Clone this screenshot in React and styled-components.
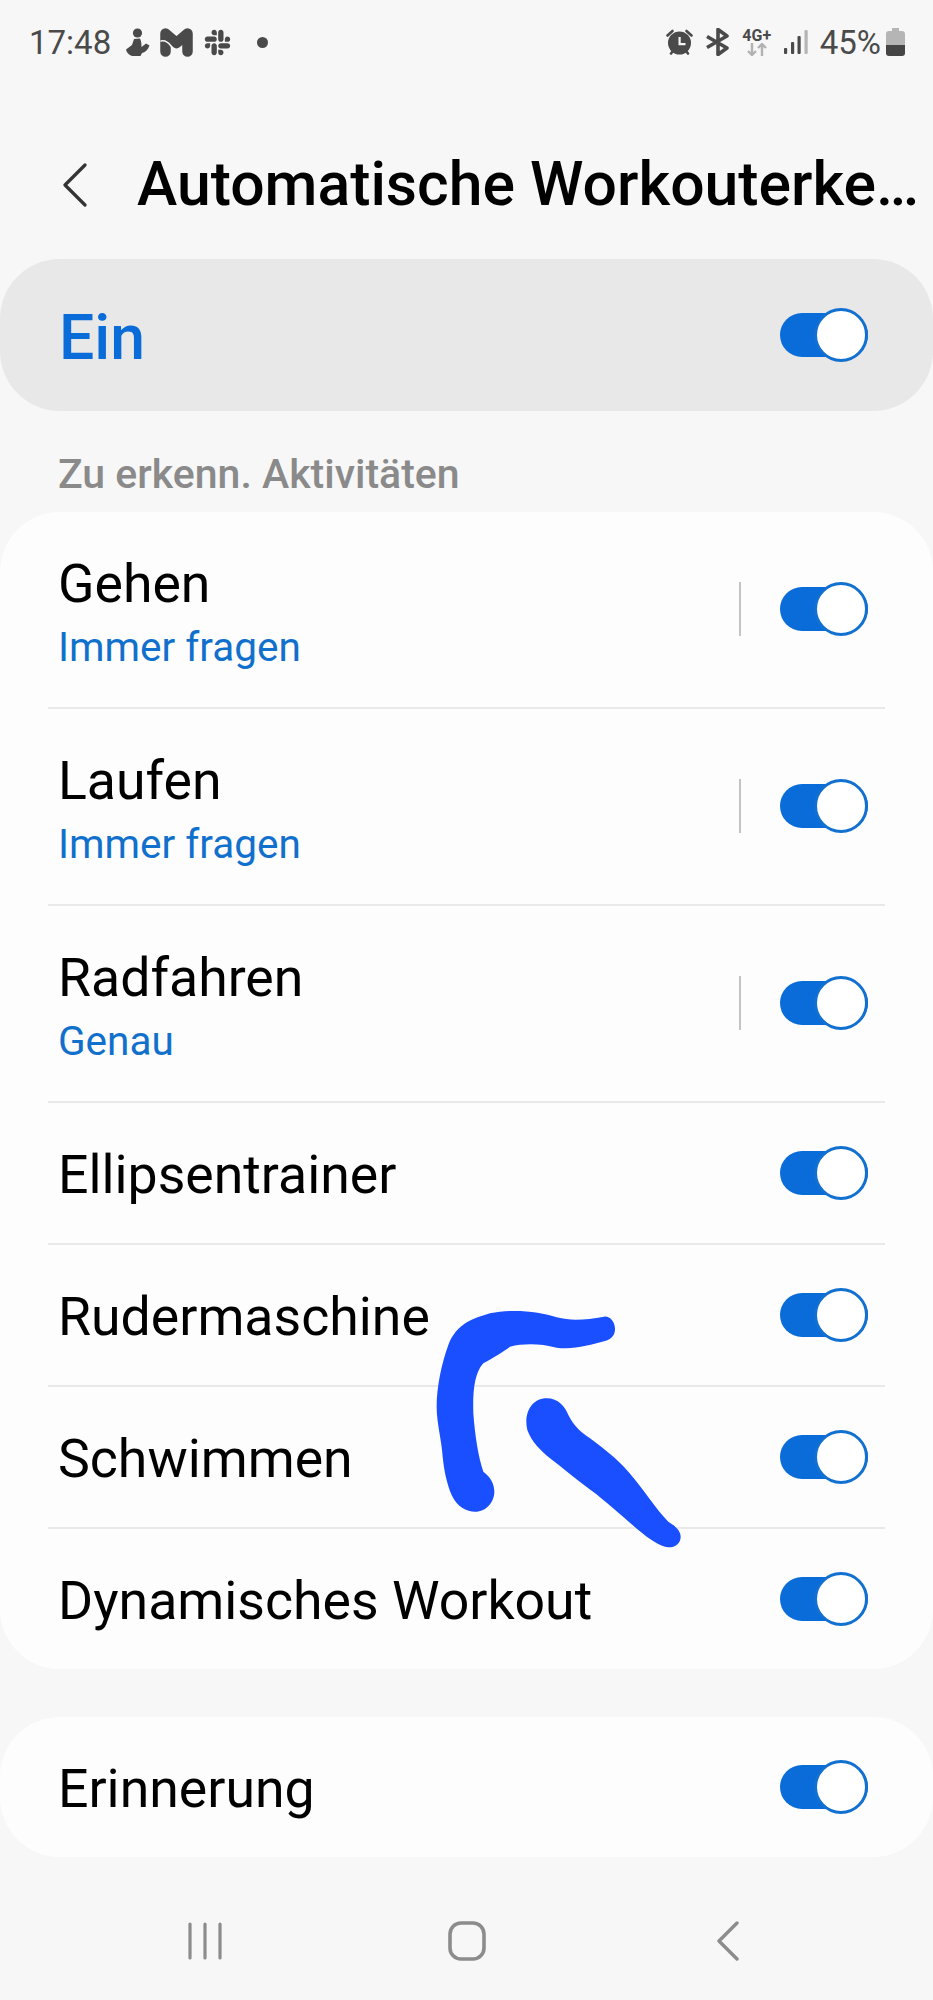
import React from 'react';
import styled, { createGlobalStyle } from 'styled-components';
import { FaSlack } from 'react-icons/fa';

const BLUE = '#0a6cd8';
const FONT = "Roboto, 'Noto Sans', 'Liberation Sans', sans-serif";

const activities = [
  { label: 'Gehen', sub: 'Immer fragen' },
  { label: 'Laufen', sub: 'Immer fragen' },
  { label: 'Radfahren', sub: 'Genau' },
  { label: 'Ellipsentrainer' },
  { label: 'Rudermaschine' },
  { label: 'Schwimmen' },
  { label: 'Dynamisches Workout' },
];

const GlobalStyle = createGlobalStyle`
  html, body {
    margin: 0;
    padding: 0;
    background: #f7f7f7;
  }
`;

const Page = styled.div`
  position: relative;
  display: flex;
  flex-direction: column;

  width: 933px;
  height: 2000px;
  overflow: hidden;

  font-family: ${FONT};
  color: #000;
  background: #f7f7f7;
`;

const StatusBar = styled.div`
  display: flex;
  align-items: center;
  justify-content: space-between;

  height: 84px;
  padding: 0 28px 0 29px;
`;

const StatusLeft = styled.div`
  display: flex;
  align-items: center;
  gap: 10px;
`;

const Time = styled.span`
  margin-right: 5px;
  font-size: 33px;
  color: #4a4a4a;
`;

const Dot = styled.span`
  width: 11px;
  height: 11px;
  margin-left: 15px;
  border-radius: 50%;
  background: #4a4a4a;
`;

const StatusRight = styled.div`
  display: flex;
  align-items: center;
  gap: 12px;
`;

const Network = styled.div`
  display: flex;
  flex-direction: column;
  align-items: center;
  width: 30px;
`;

const NetworkLabel = styled.span`
  font-size: 16px;
  font-weight: 700;
  line-height: 15px;
  color: #4a4a4a;
`;

const Percent = styled.span`
  margin-right: -7px;
  font-size: 33px;
  color: #4a4a4a;
`;

const Header = styled.div`
  display: flex;
  align-items: center;
  gap: 50px;

  height: 175px;
  padding: 26px 8px 0 63px;
  box-sizing: border-box;
`;

const Title = styled.h1`
  margin: 0;
  white-space: nowrap;

  font-size: 60.700px;
  font-weight: 500;
`;

const MainSwitch = styled.div`
  display: flex;
  align-items: center;
  justify-content: space-between;

  height: 152px;
  padding: 0 65px 0 59px;
  border-radius: 60px;
  background: #e8e8e8;
`;

const MainLabel = styled.span`
  padding-top: 4px;
  font-size: 62.500px;
  font-weight: 500;
  color: ${BLUE};
`;

const SectionTitle = styled.div`
  display: flex;
  align-items: center;

  height: 101px;
  padding: 24px 0 0 58px;
  box-sizing: border-box;

  font-size: 41px;
  font-weight: 500;
  color: #8a8a8a;
`;

const Card = styled.div`
  padding: 0 48px;
  border-radius: 60px;
  background: #fdfdfd;
`;

const ReminderCard = styled(Card)`
  margin-top: 48px;
`;

const Row = styled.div`
  display: flex;
  align-items: center;

  height: ${(p) => (p.$tall ? '197px' : '142px')};
  padding: 0 17px ${(p) => (p.$tall ? '2px' : '0')} 10px;
  border-bottom: 2px solid #e9e9e9;
  box-sizing: border-box;

  &:last-child {
    height: 140px;
    border-bottom: none;
  }
`;

const RowText = styled.div`
  display: flex;
  flex-direction: column;
  flex: 1;

  padding-top: ${(p) => (p.$tall ? '8px' : '4px')};
`;

const Label = styled.span`
  font-size: 53.600px;
  line-height: 62px;
`;

const Sub = styled.span`
  margin-top: 7px;
  font-size: 40.500px;
  line-height: 50px;
  color: #1170cc;
`;

const Separator = styled.span`
  width: 2px;
  height: 54px;
  margin-right: 39px;
  background: #c4c4c4;
`;

const Track = styled.span`
  position: relative;
  display: block;

  width: 88px;
  height: 44px;
  border-radius: 22px;
  background: ${BLUE};
`;

const Thumb = styled.span`
  position: absolute;
  top: -5px;
  right: 0;

  width: 54px;
  height: 54px;
  box-sizing: border-box;
  border: 3px solid #1270d0;
  border-radius: 50%;
  background: #fff;
`;

const NavBar = styled.div`
  flex: 1;
  display: flex;
  align-items: center;
  justify-content: space-between;

  padding: 25px 193px 0 187px;
`;

const Scribble = styled.svg`
  position: absolute;
  top: 1280px;
  left: 400px;
`;

function Toggle() {
  return (
    <Track>
      <Thumb />
    </Track>
  );
}

function NotificationIcons() {
  return (
    <>
      <svg width="24" height="28" viewBox="0 0 24 28" fill="#4a4a4a">
        <circle cx="11.500" cy="5" r="4.600" />
        <path d="M8 11l6-.5c1.500 3 1.500 6 1.500 8.500L20 15.500l3.500 2C22 22 19 24.500 16 25l-1.500 3H6c-3-1-5.500-3.500-6-6.500L6 17z" />
      </svg>
      <svg width="33" height="29" viewBox="0 0 33 29" fill="none" strokeLinecap="round">
        <path d="M5.500 5.500v18M27.500 5.500v18M6 6l10.500 9L27 6" stroke="#4a4a4a" strokeWidth="10.500" strokeLinejoin="round" />
        <path d="M1 13c4-1 7 1 10 5l4 6" stroke="#f7f7f7" strokeWidth="1.500" />
      </svg>
      <FaSlack size={29} color="#4a4a4a" />
      <Dot />
    </>
  );
}

function SystemIcons() {
  return (
    <StatusRight>
      <svg width="27" height="26" viewBox="0 0 27 26" fill="#4a4a4a">
        <circle cx="13.500" cy="14" r="11.500" />
        <path d="M1.500 6.500l5-4.500" stroke="#4a4a4a" strokeWidth="2.600" strokeLinecap="round" />
        <path d="M25.500 6.500l-5-4.500" stroke="#4a4a4a" strokeWidth="2.600" strokeLinecap="round" />
        <path d="M5 24.500l2-2.500M22 24.500L20 22" stroke="#4a4a4a" strokeWidth="2.600" strokeLinecap="round" />
        <path d="M12.500 8h2.200v6h4.800v2.200h-7z" fill="#f7f7f7" />
      </svg>
      <svg width="25" height="28" viewBox="0 0 25 28" fill="none" stroke="#4a4a4a" strokeWidth="3.600">
        <path d="M2 8.500L22 20l-9 6.500v-25L22 8 2 19.500" strokeLinejoin="round" />
      </svg>
      <Network>
        <NetworkLabel>4G+</NetworkLabel>
        <svg width="20" height="13" viewBox="0 0 20 13" fill="none" stroke="#b2b2b2" strokeWidth="2.400">
          <path d="M5 0v12M1 8l4 4 4-4M15 13V1M11 5l4-4 4 4" />
        </svg>
      </Network>
      <svg width="24" height="26" viewBox="0 0 24 26">
        <rect x="0" y="19" width="3.200" height="6" rx="1" fill="#4a4a4a" />
        <rect x="7" y="13" width="3.200" height="12" rx="1" fill="#4a4a4a" />
        <rect x="13.500" y="7" width="3.200" height="18" rx="1" fill="#4a4a4a" />
        <rect x="20.500" y="1" width="3.200" height="24" rx="1" fill="#b5b5b5" />
      </svg>
      <Percent>45%</Percent>
      <svg width="19" height="28" viewBox="0 0 19 28">
        <path d="M6 0h7v3h3a3 3 0 0 1 3 3v11H0V6a3 3 0 0 1 3-3h3z" fill="#b5b5b5" />
        <path d="M0 17h19v8a3 3 0 0 1-3 3H3a3 3 0 0 1-3-3z" fill="#454545" />
      </svg>
    </StatusRight>
  );
}

export default function App() {
  return (
    <Page>
      <GlobalStyle />

      <StatusBar>
        <StatusLeft>
          <Time>17:48</Time>
          <NotificationIcons />
        </StatusLeft>
        <SystemIcons />
      </StatusBar>

      <Header>
        <svg width="24" height="44" viewBox="0 0 24 44" fill="none" stroke="#333" strokeWidth="3.200" strokeLinecap="round" strokeLinejoin="round">
          <path d="M22 2L2 22l20 20" />
        </svg>
        <Title>Automatische Workouterke…</Title>
      </Header>

      <MainSwitch>
        <MainLabel>Ein</MainLabel>
        <Toggle />
      </MainSwitch>

      <SectionTitle>Zu erkenn. Aktivitäten</SectionTitle>

      <Card>
        {activities.map((item) => (
          <Row key={item.label} $tall={!!item.sub}>
            <RowText $tall={!!item.sub}>
              <Label>{item.label}</Label>
              {item.sub && <Sub>{item.sub}</Sub>}
            </RowText>
            {item.sub && <Separator />}
            <Toggle />
          </Row>
        ))}
      </Card>

      <ReminderCard>
        <Row>
          <RowText>
            <Label>Erinnerung</Label>
          </RowText>
          <Toggle />
        </Row>
      </ReminderCard>

      <NavBar>
        <svg width="36" height="38" viewBox="0 0 36 38" stroke="#8c8c8c" strokeWidth="3.200" strokeLinecap="round">
          <path d="M3 2v34M18 2v34M33 2v34" />
        </svg>
        <svg width="38" height="40" viewBox="0 0 38 40" fill="none" stroke="#8c8c8c" strokeWidth="3.600">
          <rect x="2" y="2" width="34" height="36" rx="11" />
        </svg>
        <svg width="29" height="40" viewBox="-5 0 29 40" fill="none" stroke="#8c8c8c" strokeWidth="3.400" strokeLinecap="round" strokeLinejoin="round">
          <path d="M21 2L3 20l18 18" />
        </svg>
      </NavBar>

      {/* hand drawn arrow someone put on top of the screenshot */}
      <Scribble width="320" height="290" viewBox="0 0 960 870" fill="#1a4fff">
        <path d="M612 110C560 118 520 125 470 112C420 95 340 85 270 100C220 115 170 130 145 195C125 250 110 320 110 380C110 430 125 480 128 530C132 570 140 610 155 645C170 680 200 695 225 695C260 695 283 665 283 635C283 610 270 590 250 575C235 530 225 470 220 400C218 340 222 280 250 250C285 230 310 215 330 200C370 190 420 190 470 203C520 210 570 195 615 183C635 178 645 165 645 148C645 125 630 108 612 110Z" />
        <path d="M440 355C475 355 495 380 505 405C520 435 540 455 570 475C610 505 650 535 685 575C725 620 770 690 805 725C830 740 842 755 842 770C842 790 825 803 805 802C780 800 745 775 715 750C680 720 620 665 575 632C530 600 490 565 450 535C420 510 395 485 382 450C370 400 395 355 440 355Z" />
      </Scribble>
    </Page>
  );
}
